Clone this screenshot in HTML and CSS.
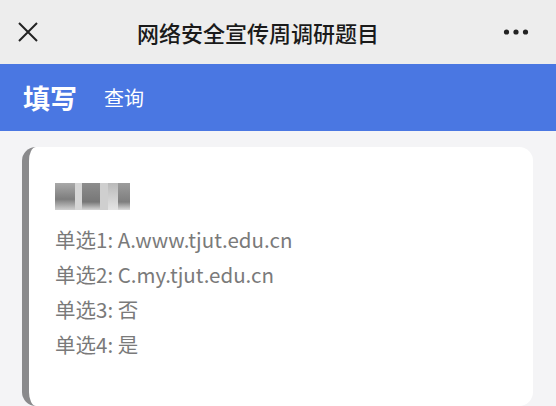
FILE: index.html
```html
<!DOCTYPE html>
<html lang="zh">
<head>
<meta charset="utf-8">
<link rel="stylesheet" href="styles.css">
</head>
<body>
<header class="topbar">
  <svg class="close" width="20" height="20" viewBox="0 0 20 20"><path d="M1 1 L19 19 M19 1 L1 19" stroke="#222" stroke-width="2" fill="none"/></svg>
  <div class="title">网络安全宣传周调研题目</div>
  <svg class="more" width="26" height="8" viewBox="0 0 26 8"><circle cx="3.5" cy="4" r="2.6" fill="#222"/><circle cx="13" cy="4" r="2.6" fill="#222"/><circle cx="22.5" cy="4" r="2.6" fill="#222"/></svg>
</header>
<nav class="tabs">
  <span class="tab active">填写</span>
  <span class="tab">查询</span>
</nav>
<main class="content">
  <section class="card">
    <div class="mosaic">
      <span class="m1"></span><span class="m2"></span><span class="m3"></span><span class="m4"></span><span class="m5"></span><span class="m6"></span>
    </div>
    <p class="line">单选1: A.www.tjut.edu.cn</p>
    <p class="line">单选2: C.my.tjut.edu.cn</p>
    <p class="line">单选3: 否</p>
    <p class="line">单选4: 是</p>
  </section>
</main>
</body>
</html>
```
FILE: styles.css
```css
* { box-sizing: border-box; }
html, body { margin: 0; padding: 0; }
body {
  width: 556px;
  height: 406px;
  overflow: hidden;
  background: #f4f4f6;
  font-family: "Noto Sans CJK SC", "Noto Sans", sans-serif;
}
.topbar {
  height: 64px;
  background: #ededed;
  display: flex;
  align-items: center;
  padding: 0 27px 0 18px;
}
.close { display: block; }
.title {
  font-size: 22px;
  color: #1a1a1a;
  font-weight: 500;
  margin-left: 99px;
  flex: 1;
}
.more { display: block; }
.tabs {
  height: 67px;
  background: #4a77e2;
  display: flex;
  align-items: center;
  padding-left: 23px;
  gap: 27px;
}
.tab { color: #fff; font-size: 20px; }
.tab.active { font-size: 27px; font-weight: 700; }
.content { padding: 16px 23px 0 22px; }
.card {
  background: #fff;
  border-left: 7px solid #8a8a8c;
  border-radius: 14px;
  height: 259px;
  padding: 36px 0 0 26px;
}
.mosaic {
  display: flex;
  height: 27px;
  margin-bottom: 12px;
}
.mosaic span { display: block; height: 100%; }
.m1 { width: 20px; background: linear-gradient(#a9a9a9, #7d7d7d 60%, #d0d0d0); }
.m2 { width: 7px; background: #d6d6d6; }
.m3 { width: 18px; background: linear-gradient(#8d8d8d, #777 70%, #d6d6d6); }
.m4 { width: 8px; background: #cfcfcf; }
.m5 { width: 10px; background: linear-gradient(#b9b9b9, #e4e4e4); }
.m6 { width: 12px; background: linear-gradient(#9c9c9c, #7e7e7e 70%, #dcdcdc); }
.line {
  margin: 0;
  font-size: 20.5px;
  line-height: 35px;
  color: #7a7a7a;
}
```
